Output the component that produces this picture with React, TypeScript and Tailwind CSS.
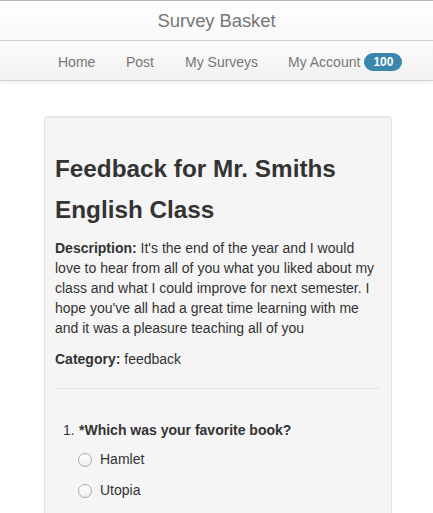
import React from "react";

export default function App() {
  const font = { fontFamily: '"Liberation Sans", Arial, Helvetica, sans-serif' };
  return (
    <div className="min-h-[513px] bg-white text-[#333]" style={font}>
      <div className="border-t border-[#b5b5b5] shadow-[0_2px_4px_rgba(0,0,0,0.06)]">
        <div className="h-[40px] flex items-center justify-center bg-gradient-to-b from-white to-[#f8f8f8] border-b border-[#cdcdcd]">
          <span className="text-[18.5px] text-[#777] tracking-[-0.1px]">Survey Basket</span>
        </div>
        <div className="h-[40px] pt-[3px] flex items-center bg-gradient-to-b from-[#fbfbfb] to-[#f1f1f1] border-b border-[#d2d2d2] pl-[58px] text-[14px] text-[#777]">
          <span className="w-[68px]">Home</span>
          <span className="w-[59px]">Post</span>
          <span className="w-[103px]">My Surveys</span>
          <span className="flex items-center">
            My Account
            <span className="ml-[4px] h-[18px] px-[9px] rounded-[9px] bg-[#3a87ad] text-white text-[12px] font-bold flex items-center leading-none">100</span>
          </span>
        </div>
      </div>
      <div className="pt-[35px] pl-[44px]">
        <div className="w-[348px] bg-[#f5f5f5] border border-[#e3e3e3] rounded-[4px] shadow-[inset_0_1px_1px_rgba(0,0,0,0.05)] px-[10px] pt-[31px] pb-[40px]">
          <h2 className="text-[24.3px] leading-[41px] font-bold text-[#333]">Feedback for Mr. Smiths English Class</h2>
          <p className="mt-[8px] text-[14px] leading-[20px]">
            <b>Description:</b> It's the end of the year and I would love to hear from all of you what you liked about my class and what I could improve for next semester. I hope you've all had a great time learning with me and it was a pleasure teaching all of you
          </p>
          <p className="mt-[11px] text-[14px] leading-[21px]">
            <b>Category:</b> feedback
          </p>
          <div className="mt-[18px] border-t border-[#e6e6e6]" />
          <div className="mt-[31px] pl-[8px] text-[14px] leading-[21px]">
            <div className="flex">
              <span className="w-[16px]">1.</span>
              <b>*Which was your favorite book?</b>
            </div>
            <div className="mt-[8px] pl-[15px] flex flex-col gap-[10px]">
              {["Hamlet", "Utopia"].map((o) => (
                <div key={o} className="flex items-center">
                  <span className="w-[14px] h-[14px] rounded-full border border-[#aaa] bg-gradient-to-b from-white to-[#f0f0f0]" />
                  <span className="ml-[8px]">{o}</span>
                </div>
              ))}
            </div>
          </div>
        </div>
      </div>
    </div>
  );
}
